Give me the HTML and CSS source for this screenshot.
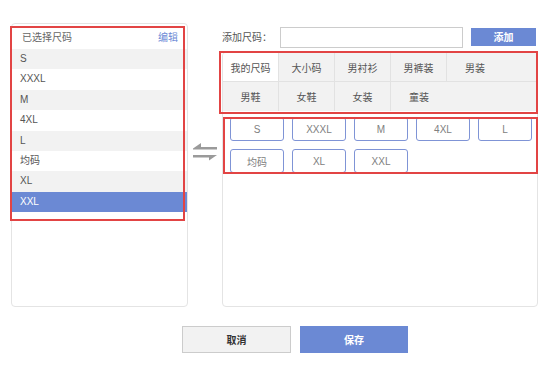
FILE: index.html
```html
<!DOCTYPE html>
<html lang="zh-CN">
<head>
	<meta charset="utf-8">
	<title>尺码设置</title>
	<link rel="stylesheet" href="styles.css">
</head>
<body>
	<div class="page">
		<div class="main">
			<!-- selected sizes -->
			<div class="panel selected">
				<div class="selected-head">
					<span>已选择尺码</span>
					<a class="edit" href="#">编辑</a>
				</div>
				<ul class="size-list">
					<li class="odd">S</li>
					<li>XXXL</li>
					<li class="odd">M</li>
					<li>4XL</li>
					<li class="odd">L</li>
					<li>均码</li>
					<li class="odd">XL</li>
					<li class="active">XXL</li>
				</ul>
			</div>

			<div class="swap">
				<svg width="24" height="22" viewBox="0 0 24 22">
					<polygon points="0,8.5 8,3 8,7 24,7 24,9.5 0,9.5" fill="#9a9a9a"/>
					<polygon points="0,15 24,15 16,20.5 16,17.5 0,17.5" fill="#9a9a9a"/>
				</svg>
			</div>

			<!-- size library -->
			<div class="right">
				<div class="add-row">
					<label class="add-label">添加尺码：</label>
					<input class="add-input" type="text">
					<button class="btn-add">添加</button>
				</div>
				<div class="panel library">
					<div class="tabs">
						<div class="tab current">我的尺码</div>
						<div class="tab">大小码</div>
						<div class="tab">男衬衫</div>
						<div class="tab">男裤装</div>
						<div class="tab last">男装</div>
						<div class="tab row2">男鞋</div>
						<div class="tab row2">女鞋</div>
						<div class="tab row2">女装</div>
						<div class="tab row2 end">童装</div>
					</div>
					<div class="chips">
						<span class="chip">S</span>
						<span class="chip">XXXL</span>
						<span class="chip">M</span>
						<span class="chip">4XL</span>
						<span class="chip">L</span>
						<span class="chip">均码</span>
						<span class="chip">XL</span>
						<span class="chip">XXL</span>
					</div>
				</div>
			</div>
		</div>

		<div class="actions">
			<button class="btn-cancel">取消</button>
			<button class="btn-save">保存</button>
		</div>
	</div>

	<!-- annotation boxes -->
	<div class="mark mark-list"></div>
	<div class="mark mark-tabs"></div>
	<div class="mark mark-chips"></div>
</body>
</html>
```

FILE: styles.css
```css
html {
	height: 100%;
}

body {
	margin: 0;
	padding: 0;
	background: #ffffff;
	color: #555555;
	font-family: "Liberation Sans", "Noto Sans CJK SC", sans-serif;
	font-size: 10px;
}

.page {
	padding: 23px 0 0 11px;
}

.main {
	display: flex;
	align-items: flex-start;
}

.panel {
	box-sizing: border-box;
	border: 1px solid #e4e4e4;
	border-radius: 4px;
	overflow: hidden;
	background: #ffffff;
}

.selected {
	width: 177px;
	height: 284px;
}

.selected-head {
	display: flex;
	justify-content: space-between;
	align-items: center;
	height: 25px;
	padding: 0 9px 0 10px;
	color: #666;
}

.edit {
	color: #6c8ad6;
	text-decoration: none;
}

.size-list {
	list-style: none;
	margin: 0;
	padding: 0;
}

.size-list li {
	height: 20.4px;
	line-height: 20.4px;
	padding-left: 8px;
	color: #555;
}

.size-list li.odd {
	background: #f2f2f2;
}

.size-list li.active {
	background: #6b89d4;
	color: #ffffff;
}

.swap {
	width: 24px;
	margin: 117px 5px 0 5px;
}

.swap svg {
	display: block;
}

.right {
	width: 316px;
	display: flex;
	flex-direction: column;
}

.add-row {
	display: flex;
	align-items: center;
	margin-top: 3px;
	height: 21px;
}

.add-label {
	width: 58px;
	color: #555;
}

.add-input {
	box-sizing: border-box;
	width: 183px;
	height: 21px;
	margin: 0;
	border: 1px solid #cccccc;
	padding: 0 4px;
	margin-top: 2px;
}

.btn-add {
	width: 65px;
	height: 18px;
	margin: 0 0 0 8px;
	border: none;
	background: #6b89d4;
	color: #ffffff;
	font-family: inherit;
	font-size: 10px;
	font-weight: bold;
}

.library {
	margin-top: 5px;
	height: 255px;
}

.tabs {
	display: grid;
	grid-template-columns: repeat(4, 56px) 1fr;
	grid-auto-rows: 29px;
	background: #f2f2f2;
}

.tab {
	display: flex;
	align-items: center;
	justify-content: center;
	border-right: 1px solid #e2e2e2;
	border-bottom: 1px solid #e2e2e2;
	color: #555;
}

.tab.last {
	border-right: none;
	justify-content: flex-start;
	padding-left: 18px;
}

.tab.row2 {
	border-bottom: none;
}

.tab.end {
	border-right: none;
}

.tab.current {
	background: #ffffff;
}

.chips {
	display: grid;
	grid-template-columns: repeat(5, 54px);
	grid-auto-rows: 24px;
	gap: 8px;
	padding: 6px 0 0 7px;
}

.chip {
	display: flex;
	align-items: center;
	justify-content: center;
	border: 1px solid #7f94d6;
	border-radius: 3px;
	color: #808080;
}

.actions {
	display: flex;
	gap: 9px;
	padding: 19px 0 0 171px;
}

.actions button {
	height: 27px;
	font-family: inherit;
	font-size: 10px;
	font-weight: bold;
	margin: 0;
}

.btn-cancel {
	width: 109px;
	background: #f2f2f2;
	border: 1px solid #cccccc;
	color: #333;
}

.btn-save {
	width: 108px;
	background: #6b89d4;
	border: none;
	color: #ffffff;
}

.mark {
	position: absolute;
	box-sizing: border-box;
	border: 2px solid #e24444;
}

.mark-list {
	left: 10px;
	top: 26px;
	width: 175px;
	height: 195px;
}

.mark-tabs {
	left: 219px;
	top: 51px;
	width: 319px;
	height: 63px;
}

.mark-chips {
	left: 223px;
	top: 117px;
	width: 315px;
	height: 57px;
}
```
